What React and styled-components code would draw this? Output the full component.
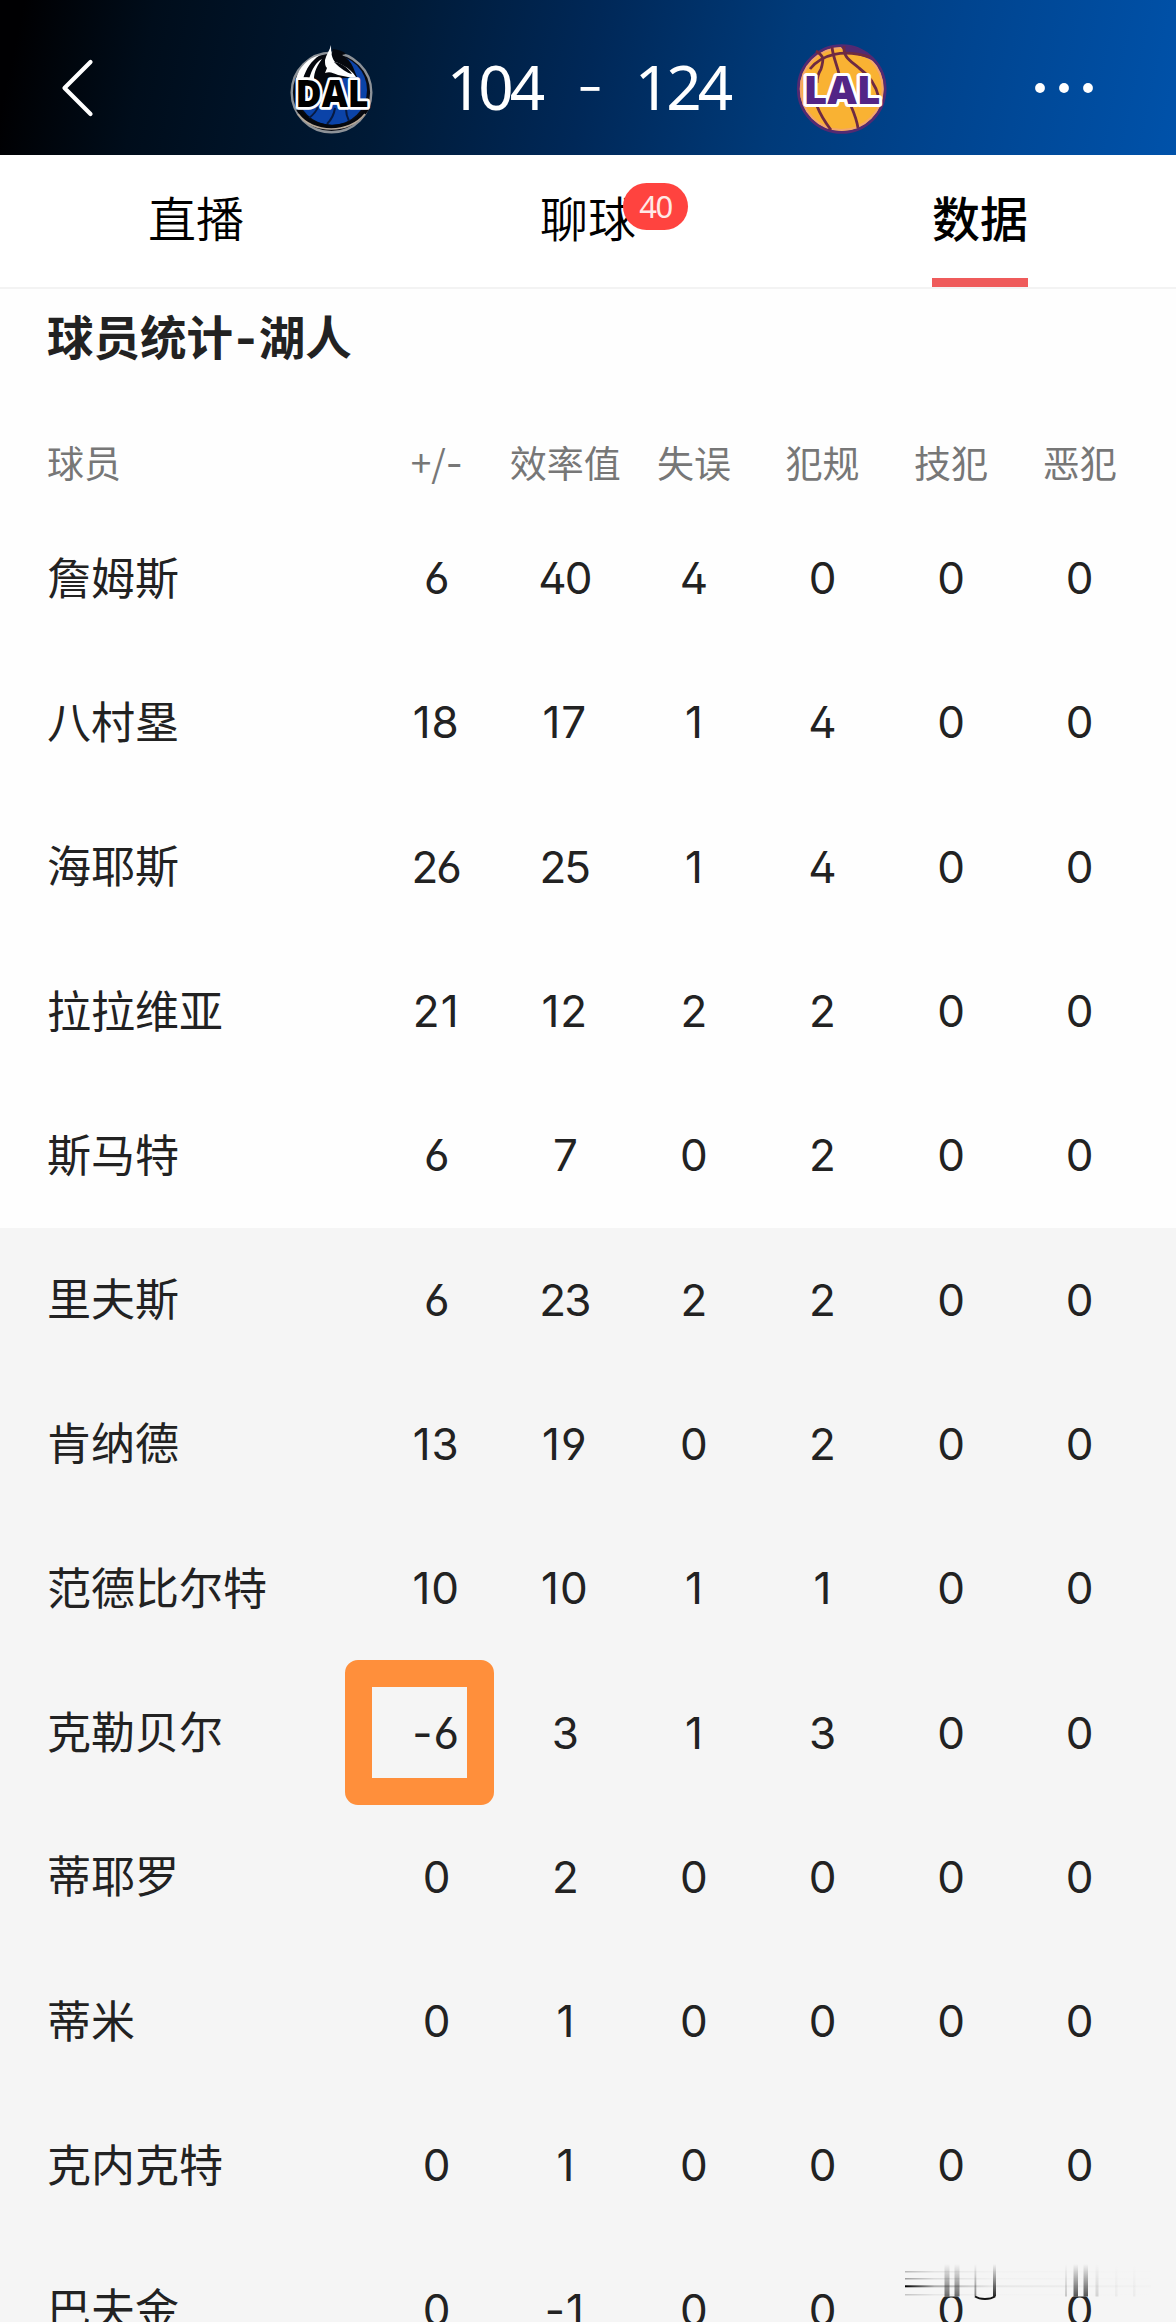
import React from "react";
import styled, { createGlobalStyle } from "styled-components";

const GlobalStyles = createGlobalStyle`
  * {
    box-sizing : border-box;
  }

  body {
    margin      : 0;
    background  : #fefefe;
    font-family : "Noto Sans CJK SC", sans-serif;
  }
`;

const PageStyles = styled.div`
  width    : 1176px;
  height   : 2322px;
  overflow : hidden;
  position : relative;
`;

const HeaderStyles = styled.header`
  height      : 155px;
  display     : flex;
  align-items : center;
  padding     : 20px 82px 0 58px;
  background  : linear-gradient(102deg, #000002 2%, #000d1b 13%, #001a36 33%, #002858 50%, #003a79 66%, #00448f 80%, #0052aa 100%);

  svg {
    display     : block;
    flex-shrink : 0;
  }

  .more {
    margin-left : auto;
  }
`;

const ScoreboardStyles = styled.div`
  display     : flex;
  align-items : center;
  margin-left : 184px;
`;

const ScoreLine = styled.div`
  display        : flex;
  margin         : 0 55px 4px 57px;
  color          : #fff;
  font-family    : "Noto Sans", sans-serif;
  font-size      : 62px;
  line-height    : 80px;
  letter-spacing : -4px;
  text-align     : center;
`;

const Score = styled.span`
  width : 110px;
`;

const Versus = styled.span`
  width       : 78px;
  font-family : Inter, sans-serif;
  font-weight : 300;
`;

const TabsStyles = styled.nav`
  height        : 134px;
  display       : grid;
  grid-template-columns : repeat(3, 1fr);
  border-bottom : 2px solid #f3f3f3;
  background    : #fff;
`;

const Tab = styled.div`
  display         : flex;
  justify-content : center;

  span {
    position      : relative;
    height        : 132px;
    color         : #000;
    font-size     : 48px;
    font-weight   : ${({ $active }) => ($active ? 500 : 350)};
    line-height   : 122px;
    border-bottom : 9px solid ${({ $active }) => ($active ? "#ef5b5b" : "transparent")};
  }
`;

const Badge = styled.b`
  position       : absolute;
  left           : 83px;
  top            : 28px;
  width          : 65px;
  height         : 47px;
  border-radius  : 24px;
  background     : #ff433f;
  color          : #ffe9e6;
  font-family    : "Noto Sans", sans-serif;
  font-size      : 31px;
  font-weight    : 400;
  line-height    : 46px;
  letter-spacing : -1.5px;
  text-align     : center;
`;

const SectionTitle = styled.h2`
  margin      : 0;
  height      : 133px;
  padding     : 6px 0 0 47px;
  color       : #222;
  font-size   : 46.5px;
  font-weight : 700;
  line-height : 80px;

  span {
    margin : 0 2px;
  }
`;

const Row = styled.div`
  height        : 144.3px;
  display       : grid;
  grid-template-columns : 1fr repeat(6, 128.6px);
  align-items   : center;
  padding       : 0 32px 4px 47px;
  background    : ${({ $bench }) => ($bench ? "#f5f5f5" : "#fefefe")};
  color         : #222;
  font-size     : 44px;
  white-space   : nowrap;
`;

const HeadRow = styled(Row)`
  height         : 84.5px;
  padding-bottom : 2px;
  color          : #777;
  font-size      : 37px;
`;

const Name = styled.div`
  padding-bottom : 2px;
  line-height    : 60px;
`;

const Cell = styled.div`
  position    : relative;
  line-height : 60px;
  text-align  : center;
`;

const HeadCell = styled(Cell)`
  padding-bottom : 2px;
`;

const Digits = styled.span`
  font-family           : Inter, sans-serif;
  font-feature-settings : "cv02", "cv03", "cv04";
  letter-spacing        : ${({ $loose }) => ($loose ? "1px" : "-2px")};
  margin-left           : ${({ $loose }) => ($loose ? "-1px" : "-2px")};
`;

const Dash = styled.span`
  font-family : Inter, sans-serif;
`;

const Marker = styled.i`
  position      : absolute;
  left          : -27px;
  top           : -40px;
  width         : 149px;
  height        : 145px;
  border        : 27px solid #ff8f3b;
  border-radius : 13px;
`;

const Smear = styled.svg`
  position : absolute;
  left     : 900px;
  top      : 2260px;
`;

const COLUMNS = ["+/-", "效率值", "失误", "犯规", "技犯", "恶犯"];

const PLAYERS = [
  { name: "詹姆斯", stats: [6, 40, 4, 0, 0, 0] },
  { name: "八村塁", stats: [18, 17, 1, 4, 0, 0] },
  { name: "海耶斯", stats: [26, 25, 1, 4, 0, 0] },
  { name: "拉拉维亚", stats: [21, 12, 2, 2, 0, 0] },
  { name: "斯马特", stats: [6, 7, 0, 2, 0, 0] },
  { name: "里夫斯", stats: [6, 23, 2, 2, 0, 0], bench: true },
  { name: "肯纳德", stats: [13, 19, 0, 2, 0, 0], bench: true },
  { name: "范德比尔特", stats: [10, 10, 1, 1, 0, 0], bench: true },
  { name: "克勒贝尔", stats: [-6, 3, 1, 3, 0, 0], bench: true, marked: 0 },
  { name: "蒂耶罗", stats: [0, 2, 0, 0, 0, 0], bench: true },
  { name: "蒂米", stats: [0, 1, 0, 0, 0, 0], bench: true },
  { name: "克内克特", stats: [0, 1, 0, 0, 0, 0], bench: true },
  { name: "巴夫金", stats: [0, -1, 0, 0, 0, 0], bench: true },
];

// the CJK hyphen is too short next to the labels
const withDash = (value) =>
  value.split(/(-)/).map((part, i) => (part === "-" ? <Dash key={i}>-</Dash> : part));

// "1" and "-" are narrow, so values with them get more room
const isLoose = (value) => /[1-].|.1/.test(String(value));

const BackIcon = () => (
  <svg width="40" height="64" viewBox="0 0 40 64" fill="none">
    <path d="M32.5 6 6.5 32l26 26" stroke="#fff" strokeWidth="4.2" strokeLinecap="round" strokeLinejoin="round" />
  </svg>
);

const MoreIcon = () => (
  <svg className="more" width="60" height="12" viewBox="0 0 60 12" fill="#fff">
    <circle cx="6" cy="6" r="4.9" />
    <circle cx="30" cy="6" r="4.9" />
    <circle cx="54" cy="6" r="4.9" />
  </svg>
);

const DallasLogo = () => (
  <svg width="100" height="100" viewBox="283 38 100 100">
    <circle cx="332.5" cy="92.5" r="39.8" fill="#0a0c14" stroke="#8d9298" strokeWidth="2.4" />
    <circle cx="333" cy="90" r="35" fill="#0b43a8" />
    <path d="M295 88C299 67 315 55 331 54l4 26-10 14-30 4Z" fill="#05070d" />
    <path d="M297 79c3-12 12-21 24-24-9 6-14 14-17 24Zm13 0c3-10 7-17 13-20-5 7-8 13-8 20Z" fill="#fff" />
    <path d="M334 49c6 1 10 2 13 5l-4 1c5 3 9 7 11 12l4 10-22 2-8-8Z" fill="#05070d" />
    <path d="M332 45c-1 5-5 10-6 15 0 4 0 6 2 8l-2 5c5-2 8 0 13 2l10 2 8 0c-3-5-8-9-12-11-3-2-5-3-9-4-3-4-4-8-4-17Z" fill="#fff" />
    <path d="M335 62c8 1 14 6 18 12-5-1-11-5-18-12Z" fill="#05070d" />
    <path d="M336 108c-1 7-4 12-8 16m-9-17c-2 5-5 8-9 11m37-9c0 5 1 8 3 12" stroke="#071a42" strokeWidth="2" fill="none" />
    <path d="M299 109c12 22 54 25 69 0" stroke="#05070d" strokeWidth="4" fill="none" />
    <path d="M299 114c15 20 51 20 67 0" stroke="#b7a99a" strokeWidth="1.7" fill="none" />
    <text
      x="333" y="106.500" textAnchor="middle" textLength="73" lengthAdjust="spacingAndGlyphs"
      fontFamily="Open Sans" fontWeight="800" fontSize="37.500"
      fill="#000" stroke="#fff" strokeWidth="5.500" strokeLinejoin="round" paintOrder="stroke"
    >
      DAL
    </text>
  </svg>
);

const LakersLogo = () => (
  <svg width="100" height="100" viewBox="793 38 100 100">
    <circle cx="842.700" cy="89" r="43.300" fill="#f9b233" stroke="#532a72" strokeWidth="3" />
    <circle cx="842.700" cy="89" r="41" fill="none" stroke="#f3a66b" strokeWidth="2" />
    <path d="M841 46c14-1 29 5 37 17-10-6-20-9-31-10Z" fill="#532a72" />
    <g fill="none" stroke="#6e2a42" strokeWidth="2.800">
      <path d="M811 69c12-15 33-20 60-12" />
      <path d="M817 51c8 5 8 8 5 18-3 5-4 10-4 14" />
      <path d="M833 47c1 10 5 18 7 27" />
      <path d="M845 46c-1 12 7 15 15 22 11 8 17 17 20 30" />
      <path d="M818 106c3 8 8 16 14 24" />
      <path d="M852 106c3 7 6 15 7 22" />
    </g>
    <text
      x="843" y="103.500" textAnchor="middle" textLength="77" lengthAdjust="spacingAndGlyphs"
      fontFamily="Open Sans" fontWeight="800" fontSize="38.500"
      fill="#532586" stroke="#fff" strokeWidth="6" strokeLinejoin="round" paintOrder="stroke"
    >
      LAL
    </text>
  </svg>
);

const STREAKS = [
  { x: 44.5, w: 5, o: 0.6 },
  { x: 54.5, w: 5, o: 0.6 },
  { x: 74.5, w: 1.8, o: 0.5 },
  { x: 93, w: 3, o: 0.9 },
  { x: 165, w: 2, o: 0.2 },
  { x: 173.5, w: 4.5, o: 0.7 },
  { x: 183.5, w: 4.5, o: 0.7 },
  { x: 195.5, w: 3, o: 0.15 },
  { x: 215, w: 2.5, o: 0.04 },
  { x: 233, w: 2.5, o: 0.04 },
];

// blurred patch over the tops of the last two zeros
const SmearPatch = () => (
  <Smear width="270" height="46" viewBox="0 0 270 46">
    <defs>
      <linearGradient id="down" x1="0" y1="0" x2="0" y2="1">
        <stop offset="0" stopColor="#111" stopOpacity="0" />
        <stop offset="1" stopColor="#111" />
      </linearGradient>
      <linearGradient id="across" x1="0" y1="0" x2="1" y2="0">
        <stop offset="0" stopColor="#000" />
        <stop offset="0.120" stopColor="#000" stopOpacity="0.300" />
        <stop offset="0.350" stopColor="#000" stopOpacity="0.060" />
        <stop offset="1" stopColor="#000" stopOpacity="0.010" />
      </linearGradient>
    </defs>
    <rect x="5" y="3" width="246" height="33.500" fill="#f5f5f5" />
    <rect x="5" y="11" width="246" height="1.500" fill="url(#across)" opacity="0.250" />
    <rect x="5" y="18" width="246" height="1.500" fill="url(#across)" opacity="0.350" />
    <rect x="5" y="25.300" width="246" height="2" fill="url(#across)" />
    <rect x="5" y="34" width="246" height="1.500" fill="url(#across)" opacity="0.200" />
    {STREAKS.map(({ x, w, o }) => (
      <rect key={x} x={x} y="4" width={w} height="32.500" fill="url(#down)" opacity={o} />
    ))}
    <path d="M75 36.500c5 3.200 15 3.200 20 0" stroke="#111" strokeWidth="2" fill="none" />
  </Smear>
);

const App = () => {
  return (
    <PageStyles>
      <GlobalStyles />

      <HeaderStyles>
        <BackIcon />
        <ScoreboardStyles>
          <DallasLogo />
          <ScoreLine>
            <Score>104</Score>
            <Versus>-</Versus>
            <Score>124</Score>
          </ScoreLine>
          <LakersLogo />
        </ScoreboardStyles>
        <MoreIcon />
      </HeaderStyles>

      <TabsStyles>
        <Tab><span>直播</span></Tab>
        <Tab><span>聊球<Badge>40</Badge></span></Tab>
        <Tab $active><span>数据</span></Tab>
      </TabsStyles>

      <SectionTitle>球员统计{withDash("-")}湖人</SectionTitle>

      <HeadRow>
        <Name>球员</Name>
        {COLUMNS.map((column) => (
          <HeadCell key={column}>{withDash(column)}</HeadCell>
        ))}
      </HeadRow>

      {PLAYERS.map(({ name, stats, bench, marked }) => (
        <Row key={name} $bench={bench}>
          <Name>{name}</Name>
          {stats.map((value, i) => (
            <Cell key={i}>
              <Digits $loose={isLoose(value)}>{value}</Digits>
              {marked === i && <Marker />}
            </Cell>
          ))}
        </Row>
      ))}

      <SmearPatch />
    </PageStyles>
  );
};

export default App;
